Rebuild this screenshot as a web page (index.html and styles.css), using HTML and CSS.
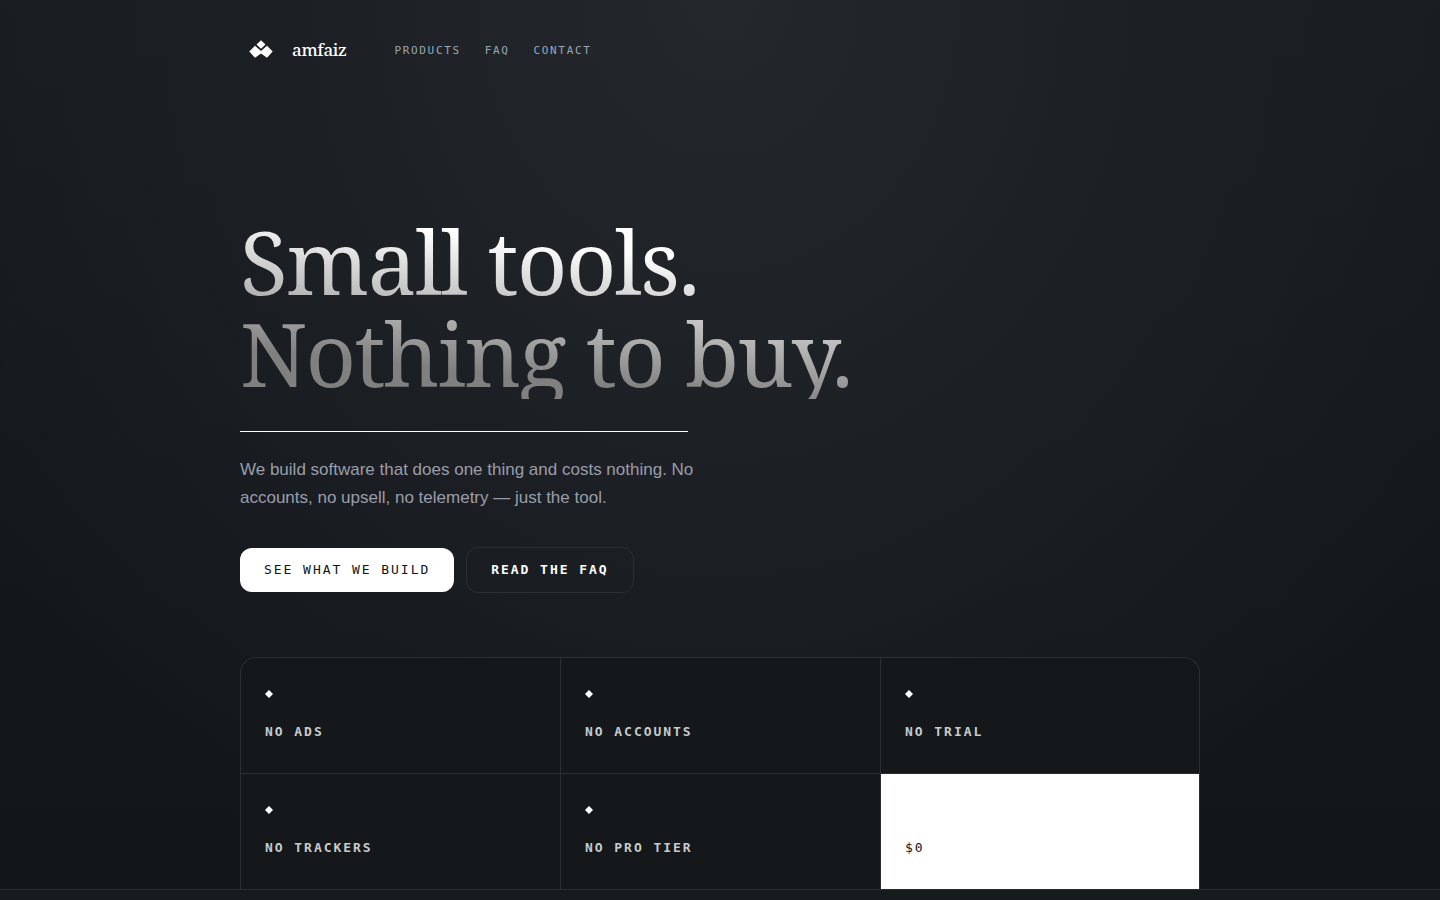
FILE: index.html
```html
<!DOCTYPE html>
<html lang="en">
<head>
<meta charset="utf-8">
<title>amfaiz</title>
<link rel="stylesheet" href="styles.css">
</head>
<body>
<div class="hero">
  <header class="wrap header">
    <a class="brand" href="#">
      <svg class="logo" viewBox="0 0 42 42" aria-hidden="true"><path d="M21 11.300l4.500 4.200-4.500 4.300-4.500-4.300zM9.300 22.500l5.700-5.700L21 22l6-5.200 5.700 5.700-5.700 6.300L21 24.600l-6 4.200z"/></svg>
      <span>amfaiz</span>
    </a>
    <nav class="nav" aria-label="Main">
      <a href="#products">Products</a>
      <a href="#faq">FAQ</a>
      <a href="#contact">Contact</a>
    </nav>
  </header>
  <main class="wrap main">
    <h1 class="title">Small tools.<br>Nothing to buy.</h1>
    <hr class="rule">
    <p class="lead">We build software that does one thing and costs nothing. No accounts, no upsell, no telemetry — just the tool.</p>
    <div class="actions">
      <a class="btn btn-solid" href="#products">See what we build</a>
      <a class="btn btn-ghost" href="#faq">Read the FAQ</a>
    </div>
    <ul class="grid">
      <li class="cell">No ads</li>
      <li class="cell">No accounts</li>
      <li class="cell">No trial</li>
      <li class="cell">No trackers</li>
      <li class="cell">No pro tier</li>
      <li class="cell cell-price">$0</li>
    </ul>
  </main>
</div>
<section class="next" id="products"></section>
</body>
</html>
```

FILE: styles.css
```css
* { box-sizing: border-box; }

body {
  display: flex;
  flex-direction: column;
  min-height: 100vh;
  margin: 0;
  background: #161b1e;
  color: #fff;
  font-family: "Liberation Sans", Arial, sans-serif;
}

a { color: inherit; text-decoration: none; }

.hero {
  background:
    radial-gradient(ellipse 60% 110% at 50% 0, #24282c, #1c2024 50%, transparent),
    linear-gradient(#171c1f, #12151a);
}

.wrap { max-width: 960px; margin: 0 auto; }

.header { display: flex; align-items: center; gap: 48px; height: 100px; }

.brand {
  display: flex;
  align-items: center;
  gap: 10px;
  font: 500 17px/24px "Noto Serif", "Liberation Serif", serif;
  letter-spacing: -0.02em;
}

.logo { width: 42px; height: 42px; fill: #fff; }

.nav { display: flex; gap: 24px; color: #9aa6b6; }

.nav, .btn, .cell {
  font-family: "DejaVu Sans Mono", "Liberation Mono", monospace;
  letter-spacing: 0.15em;
  text-transform: uppercase;
}

.nav { font-size: 11px; }

.main { padding-top: 115px; }

.title {
  margin: 0;
  font: 400 88px/92px "Noto Serif", "Liberation Serif", serif;
  letter-spacing: -0.02em;
  background: linear-gradient(186deg, #fff 34%, #808080 82%);
  background-clip: text;
  -webkit-background-clip: text;
  color: transparent;
}

.rule { width: 448px; max-width: 100%; height: 1px; margin: 32px 0 24px; border: 0; background: #fff; }

.lead { max-width: 480px; margin: 0; font-size: 17px; line-height: 28px; color: #9a9da9; }

.actions { display: flex; align-items: center; gap: 12px; margin-top: 35px; }

.btn {
  padding: 12px 24px;
  border-radius: 12px;
  font-size: 13px;
  line-height: 20px;
}

.btn-solid { background: #fff; color: #111518; }
.btn-ghost { border: 1px solid #2b2e33; font-weight: 700; }

.grid {
  display: grid;
  grid-template-columns: repeat(3, 1fr);
  margin: 64px 0 0;
  padding: 0;
  list-style: none;
}

.cell {
  display: flex;
  flex-direction: column;
  gap: 24px;
  padding: 32px 24px 31px;
  border: solid #2b2e32;
  border-width: 1px 0 0 1px;
  background: #14181a;
  font-size: 13px;
  font-weight: 700;
  line-height: 20px;
  color: #c8cacc;
}

.cell:nth-child(3n) { border-right-width: 1px; }
.cell:first-child { border-top-left-radius: 16px; }
.cell:nth-child(3) { border-top-right-radius: 16px; }

.cell::before {
  content: "";
  width: 8px;
  height: 8px;
  background: #fff;
  clip-path: polygon(50% 0, 100% 50%, 50% 100%, 0 50%);
}

.cell-price { background: #fff; color: #111518; font-weight: 400; }

.next { flex: 1; border-top: 1px solid #2b2d32; }
```
